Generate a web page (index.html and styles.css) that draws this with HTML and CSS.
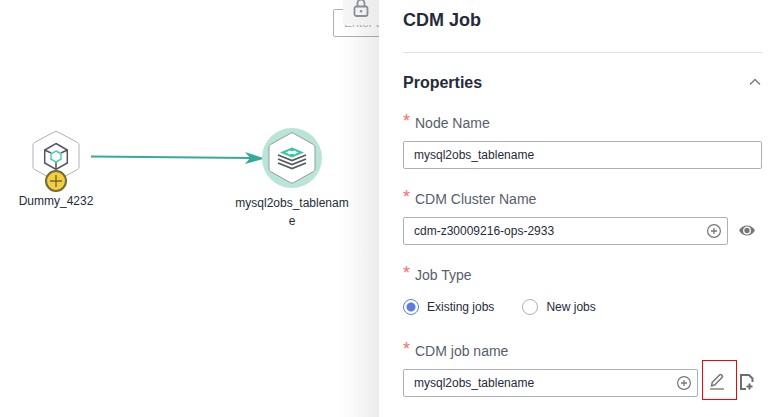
FILE: index.html
```html
<!DOCTYPE html>
<html lang="en">
<head>
<meta charset="utf-8">
<title>CDM Job</title>
<link rel="stylesheet" href="styles.css">
</head>
<body>
<div class="app">
  <main class="canvas">
    <svg class="edge" width="174" height="16" viewBox="0 0 174 16" aria-hidden="true">
      <path d="M0 7.500L160 9" stroke="#36ab99" stroke-width="2" fill="none"/>
      <path d="M174 9.500L154 3l5 6-5 6z" fill="#36ab99"/>
    </svg>
    <div class="node node-dummy">
      <svg width="60" height="62" viewBox="0 0 60 62" aria-hidden="true">
        <path d="M28.500 6.800Q30 6 31.500 6.800L51.500 17.500Q53 18.500 53 20V42Q53 43.500 51.500 44.500L31.500 55.200Q30 56 28.500 55.200L8.500 44.500Q7 43.500 7 42V20Q7 18.500 8.500 17.500Z" fill="#fff" stroke="#adafb3"/>
        <g fill="none" stroke="#53565e" stroke-width="1.500">
          <path d="M30 18.500l11.300 6.500v13L30 44.500 18.700 38V25zM18.700 25l6.300 3M41.300 25L35 28M30 37v7.500"/>
          <path d="M30 26l5 2.800v5.400L30 37l-5-2.800v-5.400z" stroke="#4fd0ae" fill="#fff"/>
        </g>
      </svg>
      <svg class="node-badge" width="22" height="22" viewBox="0 0 22 22" aria-hidden="true">
        <circle cx="11" cy="11" r="10" fill="#f3cf3f" stroke="#746a34" stroke-width="2"/>
        <path d="M5 11h12M11 5v12" stroke="#746a34" stroke-width="1.400"/>
      </svg>
      <span class="node-label">Dummy_4232</span>
    </div>
    <div class="node node-job">
      <svg width="60" height="62" viewBox="0 0 60 62" aria-hidden="true">
        <circle cx="30" cy="31" r="30" fill="#b8e5d7"/>
        <path d="M28.500 6.300Q30 5.500 31.500 6.300L51.500 17.500Q53 18.500 53 20V42Q53 43.500 51.500 44.500L31.500 55.700Q30 56.500 28.500 55.700L8.500 44.500Q7 43.500 7 42V20Q7 18.500 8.500 17.500Z" fill="#fff" stroke="#999"/>
        <path d="M18 25.500L30 20.500 42 25.500 30 30.500z" fill="#36c9a0"/>
        <path d="M23.500 25.500l2.500-1 1-1 3 .7 3-.7 1 1 2.500 1-2.500 1-1 1-3-.7-3 .7-1-1z" fill="#fff"/>
        <path d="M16 28l14 5.500L44 28M16 32l14 5.500L44 32M16 36l14 5.500L44 36" fill="none" stroke="#555960" stroke-width="1.800"/>
      </svg>
      <span class="node-label">mysql2obs_tablename</span>
    </div>
    <input class="search" type="text" placeholder="Enter a name" aria-label="Search">
    <div class="shade"></div>
    <button class="lock" type="button" aria-label="Lock">
      <svg width="16" height="18" viewBox="0 0 16 18" fill="none" stroke="#8b8e97" stroke-width="1.800" aria-hidden="true">
        <rect x="1.500" y="6.500" width="13" height="9.500" rx="2"/>
        <path d="M4.500 6.500V3a3.500 3.500 0 0 1 7 0v3.500"/>
        <circle cx="8" cy="11.200" r="1.200" fill="#8b8e97" stroke="none"/>
      </svg>
    </button>
  </main>

  <aside class="panel">
    <h1 class="panel-title">CDM Job</h1>
    <form class="form">
      <div class="section-head">
        <h2 class="section-title">Properties</h2>
        <button class="icon-button" type="button" aria-label="Collapse">
          <svg width="14" height="12" viewBox="0 0 14 12" fill="none" stroke="#777" stroke-width="1.300" aria-hidden="true"><path d="M2 7.500l5-5 5 5"/></svg>
        </button>
      </div>

      <div class="field">
        <label class="label" for="node-name"><span class="required">*</span>Node Name</label>
        <div class="row">
          <div class="box"><input class="text" id="node-name" type="text" value="mysql2obs_tablename"></div>
        </div>
      </div>

      <div class="field">
        <label class="label" for="cluster"><span class="required">*</span>CDM Cluster Name</label>
        <div class="row">
          <div class="box">
            <input class="text" id="cluster" type="text" value="cdm-z30009216-ops-2933">
            <button class="icon-button" type="button" aria-label="Select cluster">
              <svg width="14" height="14" viewBox="0 0 14 14" fill="none" stroke="#777" aria-hidden="true"><circle cx="7" cy="7" r="6.400" stroke-width="1.200"/><path d="M4 7h6M7 4v6" stroke-width="1.300"/></svg>
            </button>
          </div>
          <div class="actions actions-one">
            <button class="icon-button" type="button" aria-label="View">
              <svg width="16" height="12" viewBox="0 0 16 12" aria-hidden="true"><path d="M0 5.500Q3 .5 8 .5T16 5.500Q13 10.500 8 10.500T0 5.500z" fill="#777"/><circle cx="8" cy="5.500" r="3.300" fill="#777" stroke="#fff" stroke-width="1.300"/></svg>
            </button>
          </div>
        </div>
      </div>

      <div class="field" role="radiogroup" aria-labelledby="job-type">
        <span class="label" id="job-type"><span class="required">*</span>Job Type</span>
        <div class="row radios">
          <label class="radio"><input type="radio" name="job-type" checked>Existing jobs</label>
          <label class="radio"><input type="radio" name="job-type">New jobs</label>
        </div>
      </div>

      <div class="field">
        <label class="label" for="job-name"><span class="required">*</span>CDM job name</label>
        <div class="row">
          <div class="box">
            <input class="text" id="job-name" type="text" value="mysql2obs_tablename">
            <button class="icon-button" type="button" aria-label="Select job">
              <svg width="14" height="14" viewBox="0 0 14 14" fill="none" stroke="#777" aria-hidden="true"><circle cx="7" cy="7" r="6.400" stroke-width="1.200"/><path d="M4 7h6M7 4v6" stroke-width="1.300"/></svg>
            </button>
          </div>
          <div class="actions actions-two">
            <button class="icon-button marked" type="button" aria-label="Edit job">
              <svg width="16" height="18" viewBox="0 0 16 18" fill="none" stroke="#777" aria-hidden="true"><path d="M2.500 13l.8-3.800L10.500 2q1-1 2 0l.5.500q1 1 0 2L6 11.800z" stroke-width="1.500" stroke-linejoin="round"/><path d="M1 16h14" stroke="#8c8c8c" stroke-width="1.600"/></svg>
            </button>
            <button class="icon-button" type="button" aria-label="New job">
              <svg width="16" height="18" viewBox="0 0 16 18" fill="none" stroke="#6e6e6e" stroke-width="2" aria-hidden="true"><path d="M7 15H2V1h8l3.500 3.500V8M10.500 9.500v6M7.500 12.500h6"/></svg>
            </button>
          </div>
        </div>
      </div>
    </form>
  </aside>
</div>
</body>
</html>
```
FILE: styles.css
```css
* {
  box-sizing: border-box;
}

body {
  margin: 0;
  background: #fff;
  color: #252b3a;
  font: 12px/18px "Liberation Sans", Arial, sans-serif;
}

.app {
  display: flex;
  min-height: 100vh;
}

/* Workflow canvas */
.canvas {
  position: relative;
  flex: 1;
  overflow: hidden;
}

.node {
  position: absolute;
  display: flex;
  flex-direction: column;
  align-items: center;
  width: 120px;
}

.node-dummy {
  left: -4px;
  top: 125px;
}

.node-job {
  left: 232px;
  top: 127px;
}

.node-label {
  width: 100%;
  margin-top: 5px;
  text-align: center;
  overflow-wrap: anywhere;
}

.node-badge {
  position: absolute;
  top: 45px;
}

.edge {
  position: absolute;
  left: 91px;
  top: 149px;
}

.search {
  position: absolute;
  left: 333px;
  top: 9px;
  width: 160px;
  height: 28px;
  padding: 0 10px;
  border: 1px solid #adb0b8;
  border-radius: 2px;
  background: #fff;
  font: inherit;
}

.search::placeholder {
  color: #adb0b8;
}

.shade {
  position: absolute;
  top: 0;
  right: 0;
  bottom: 0;
  width: 44px;
  background: linear-gradient(to right, rgba(0, 0, 0, 0), rgba(0, 0, 0, 0.02) 40%, rgba(0, 0, 0, 0.08));
}

.lock {
  position: absolute;
  top: 0;
  right: 0;
  width: 36px;
  height: 25px;
  padding: 0 10px 7px;
  border: 0;
  background: linear-gradient(to right, #f7f7f8, #ebebec);
}

.lock svg {
  display: block;
}

/* Properties panel */
.panel {
  width: 393px;
  padding: 8px 10px 12px 24px;
  background: #fff;
}

.panel-title {
  margin: 0 0 20px;
  padding-bottom: 20px;
  border-bottom: 1px solid #dfe1e6;
  font-size: 18px;
  line-height: 24px;
}

.form {
  display: flex;
  flex-direction: column;
  gap: 20px;
}

.section-head {
  display: flex;
  align-items: center;
  justify-content: space-between;
}

.section-title {
  margin: 0;
  font-size: 16px;
  line-height: 20px;
}

.field {
  display: flex;
  flex-direction: column;
  gap: 8px;
}

.label {
  display: flex;
  color: #575d6c;
  font-size: 14px;
  line-height: 20px;
}

.required {
  width: 12px;
  color: #f66f6a;
  font-size: 18px;
  line-height: 16px;
}

.row {
  display: flex;
  align-items: center;
  height: 28px;
}

.box {
  display: flex;
  flex: 1;
  align-items: center;
  height: 28px;
  padding: 0 6px 0 10px;
  border: 1px solid #adb0b8;
  border-radius: 2px;
}

.text {
  flex: 1;
  min-width: 0;
  padding: 0;
  border: 0;
  outline: 0;
  background: none;
  color: inherit;
  font: inherit;
}

.icon-button {
  display: flex;
  align-items: center;
  justify-content: center;
  padding: 0;
  border: 0;
  background: none;
}

.actions {
  display: flex;
  align-items: center;
}

.actions-one {
  width: 34px;
  padding-left: 11px;
}

.actions-two {
  gap: 2px;
  width: 64px;
  padding-left: 4px;
}

.marked {
  width: 35px;
  height: 40px;
  margin-bottom: 6px;
  padding: 4px 5px 0 0;
  border: 1px solid #f00;
}

.radios {
  gap: 28px;
}

.radio {
  display: flex;
  align-items: center;
  gap: 8px;
}

.radio input {
  appearance: none;
  width: 16px;
  height: 16px;
  margin: 0;
  border: 1px solid #adb0b8;
  border-radius: 50%;
  background: #fff;
}

.radio input:checked {
  border-color: #5e7ce0;
  background: radial-gradient(circle, #5e7ce0 4px, #fff 5px);
}
```
